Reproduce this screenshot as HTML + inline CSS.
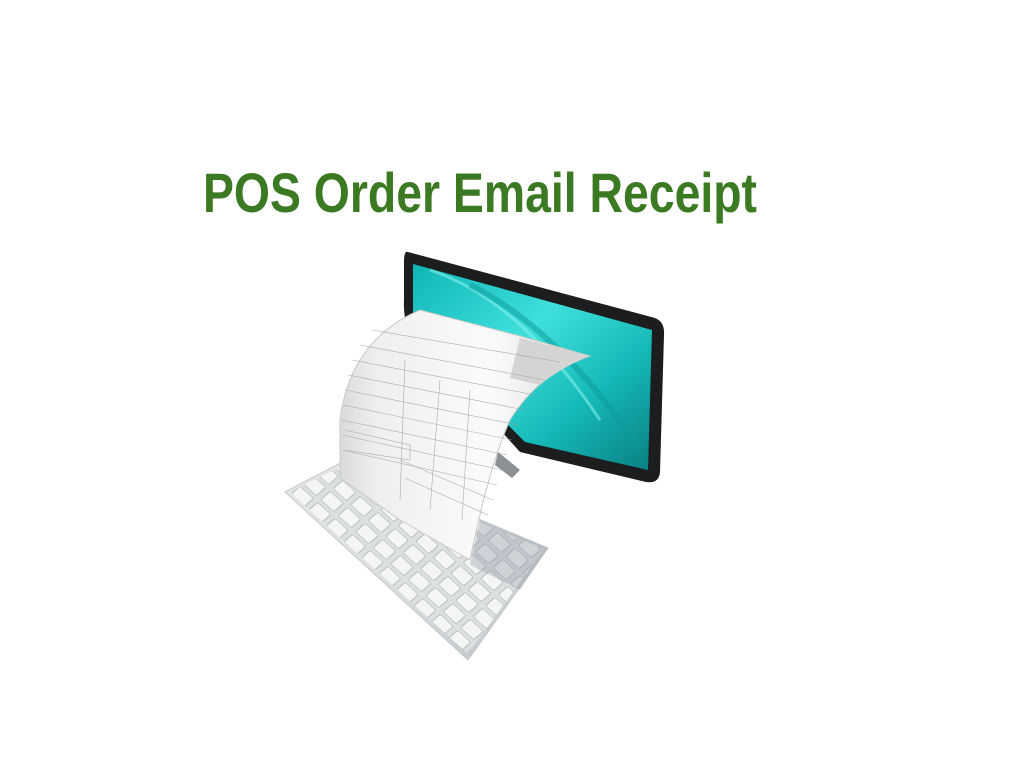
<!DOCTYPE html>
<html><head><meta charset="utf-8"><style>
html,body{margin:0;padding:0;background:#fff;width:1024px;height:768px;overflow:hidden}
</style></head><body>
<svg width="1024" height="768" viewBox="0 0 1024 768" xmlns="http://www.w3.org/2000/svg">
<defs>
<linearGradient id="scr" x1="0" y1="0" x2="1" y2="1">
<stop offset="0" stop-color="#0fb5b5"/><stop offset="0.4" stop-color="#3fe0dc"/><stop offset="0.7" stop-color="#14b8b6"/><stop offset="1" stop-color="#0a7f82"/>
</linearGradient>
<linearGradient id="kb" x1="0" y1="0" x2="1" y2="1">
<stop offset="0" stop-color="#e6e8e8"/><stop offset="0.6" stop-color="#d8dbdc"/><stop offset="1" stop-color="#b9c0c4"/>
</linearGradient>
<linearGradient id="pp" x1="0" y1="0" x2="1" y2="0">
<stop offset="0" stop-color="#d9dbdb"/><stop offset="0.15" stop-color="#efefef"/><stop offset="0.6" stop-color="#fbfbfb"/><stop offset="1" stop-color="#dcdcdc"/>
</linearGradient>
<pattern id="keys" width="10" height="10" patternUnits="userSpaceOnUse" patternTransform="matrix(1.75,1.6,1.25,-1.1,287,494)">
<rect width="10" height="10" fill="#dde0e1"/>
<rect x="1.2" y="1.2" width="7.6" height="7.6" rx="1" fill="#f4f5f5" stroke="#b3b9bc" stroke-width="0.4"/>
</pattern>
</defs>
<text x="203" y="212" font-family="Liberation Sans, sans-serif" font-weight="bold" font-size="56" fill="#3b7a22" textLength="554" lengthAdjust="spacingAndGlyphs">POS Order Email Receipt</text>
<!-- monitor -->
<path d="M408 252 L655 318 Q665 322 664 335 L660 472 Q659 484 646 482 L520 452 L410 330 Q403 320 404 300 L404 262 Q404 250 408 252 Z" fill="#1b1d1e"/>
<path d="M413 264 L652 330 L648 470 L525 442 L413 330 Z" fill="url(#scr)"/>
<path d="M430 270 Q520 300 600 420" stroke="#7ff0ea" stroke-width="3" fill="none" opacity="0.6"/>
<path d="M470 285 Q560 330 640 450" stroke="#0c9a9a" stroke-width="6" fill="none" opacity="0.5"/>
<path d="M498 452 L520 470 L512 478 L495 465 Z" fill="#8a9093"/>
<!-- keyboard -->
<path d="M285 492 L342 462 L548 548 L468 660 Z" fill="url(#kb)" stroke="#c4c9cb"/>
<path d="M290 492 L342 466 L544 549 L468 654 Z" fill="url(#keys)"/>
<path d="M480 520 L548 548 L520 590 L470 565 Z" fill="#8a96a0" opacity="0.35"/>
<!-- paper -->
<path d="M340 420 Q350 340 420 310 L520 336 L590 356 Q540 372 510 420 Q488 470 470 560 L400 520 L340 478 Z" fill="url(#pp)" stroke="#c8c8c8"/>
<path d="M520 338 L590 356 Q560 368 540 385 L510 378 Z" fill="#d4d4d4"/>
<g stroke="#9a9a9a" stroke-width="0.6" fill="none" opacity="0.8">
<path d="M372 330 L560 362"/><path d="M360 345 L545 380"/><path d="M352 360 L535 395"/><path d="M348 375 L525 410"/>
<path d="M345 390 L518 425"/><path d="M343 405 L512 440"/><path d="M342 420 L507 455"/><path d="M342 435 L502 470"/>
<path d="M342 450 L497 485"/><path d="M400 460 L493 500"/><path d="M405 478 L488 515"/>
<path d="M405 360 L400 500"/><path d="M440 380 L430 510"/><path d="M470 390 L462 520"/>
<path d="M345 430 L410 445 L410 460 L345 450"/>
</g>
</svg>
</body></html>
